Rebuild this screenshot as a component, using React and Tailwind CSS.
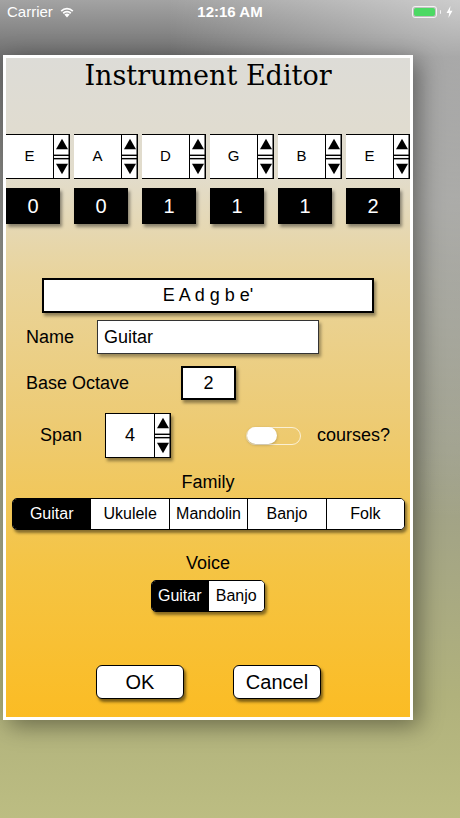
const STRINGS = [
  { note: "E", fret: "0" },
  { note: "A", fret: "0" },
  { note: "D", fret: "1" },
  { note: "G", fret: "1" },
  { note: "B", fret: "1" },
  { note: "E", fret: "2" },
];

const FAMILIES = ["Guitar", "Ukulele", "Mandolin", "Banjo", "Folk"];
const VOICES = ["Guitar", "Banjo"];

function Stepper({ className = "" }) {
  return (
    <svg className={className} viewBox="0 0 16 45" preserveAspectRatio="none" aria-hidden>
      <rect x="0" y="0" width="16" height="45" fill="#fff" />
      <path d="M8 4 L14 15 L2 15 Z" fill="#000" />
      <rect x="0" y="20.5" width="16" height="1.5" fill="#000" />
      <rect x="0" y="24" width="16" height="1.5" fill="#000" />
      <path d="M2 30 L14 30 L8 41 Z" fill="#000" />
      <rect x="14.5" y="0" width="1.5" height="45" fill="#000" />
    </svg>
  );
}

function Wifi() {
  return (
    <svg className="h-[12px] w-[16px]" viewBox="0 0 16 12" aria-hidden>
      <path d="M8 11.5 L5.4 8.6 A3.8 3.8 0 0 1 10.6 8.6 Z" fill="#fff" />
      <path d="M3.6 6.6 A6.4 6.4 0 0 1 12.4 6.6 L11.2 7.9 A4.7 4.7 0 0 0 4.8 7.9 Z" fill="#fff" />
      <path d="M1.6 4.4 A9.2 9.2 0 0 1 14.4 4.4 L13.2 5.7 A7.5 7.5 0 0 0 2.8 5.7 Z" fill="#fff" />
    </svg>
  );
}

function Segmented({ items, selected, className = "", itemClass = "" }) {
  return (
    <div
      className={`flex overflow-hidden rounded-[5px] border border-black bg-white shadow-[2px_3px_3px_rgba(0,0,0,0.45)] ${className}`}
    >
      {items.map((item, i) => (
        <div
          key={item}
          className={[
            "flex flex-1 items-center justify-center text-[16px]",
            i > 0 ? "border-l border-black" : "",
            i === selected ? "bg-black text-white" : "bg-white text-black",
            itemClass,
          ].join(" ")}
        >
          {item}
        </div>
      ))}
    </div>
  );
}

export default function App() {
  return (
    <div
      className="relative flex h-[818px] w-[460px] flex-col overflow-hidden bg-[radial-gradient(ellipse_at_top_right,rgba(255,255,255,0.45)_0%,rgba(255,255,255,0)_45%),linear-gradient(to_bottom,#a3a3a3_0%,#6f6f6f_7%,#8c8c88_25%,#9d9e8a_55%,#b0b17c_85%,#bcbd82_100%)] text-black"
      style={{ fontFamily: '"Liberation Sans", Arial, sans-serif' }}
    >
      {/* status bar */}
      <div className="relative flex h-[24px] items-center px-[7px] text-[15px] text-white">
        <div className="flex items-center gap-[6px]">
          <span>Carrier</span>
          <Wifi />
        </div>
        <span className="absolute left-1/2 -translate-x-1/2 font-semibold">12:16 AM</span>
        <div className="ml-auto flex items-center gap-[3px]">
          <div className="flex h-[12px] w-[25px] items-center rounded-[3px] border border-white/80 p-[1px]">
            <div className="h-full w-full rounded-[2px] bg-[#4cd964]" />
          </div>
          <div className="h-[4px] w-[1.5px] rounded-r bg-white/80" />
          <svg className="ml-[2px] h-[12px] w-[7px]" viewBox="0 0 7 12" aria-hidden>
            <path d="M4.5 0 L0.5 7 L3.2 7 L2.4 12 L6.5 4.8 L3.8 4.8 Z" fill="#fff" />
          </svg>
        </div>
      </div>

      {/* editor panel */}
      <div className="ml-[3px] mt-[31px] h-[665px] w-[410px] border-[3px] border-white shadow-[6px_6px_22px_rgba(0,0,0,0.4)]">
        <div className="flex h-full w-full flex-col overflow-hidden bg-[linear-gradient(to_bottom,#dddcd7_0%,#e2dccb_18%,#e9d49c_33%,#edcb74_55%,#f5c443_78%,#fbbc24_100%)]">
          <h1
            className="flex h-[34px] items-center justify-center text-[27px] leading-none"
            style={{ fontFamily: '"DejaVu Serif", "Liberation Serif", serif' }}
          >
            Instrument Editor
          </h1>

          {/* string notes with steppers */}
          <div className="mt-[42px] flex h-[45px] gap-[4px]">
            {STRINGS.map((s, i) => (
              <div key={i} className="flex h-full w-[64px] shrink-0">
                <div className="flex w-[48px] items-center justify-center border-y border-r-[1.5px] border-black bg-white text-[15px]">
                  {s.note}
                </div>
                <Stepper className="h-full w-[16px] border-y border-black" />
              </div>
            ))}
          </div>

          {/* fret numbers */}
          <div className="mt-[9px] flex h-[36px] gap-[14px]">
            {STRINGS.map((s, i) => (
              <div
                key={i}
                className="flex w-[54px] shrink-0 items-center justify-center bg-black text-[20px] text-white shadow-[2px_3px_3px_rgba(0,0,0,0.4)]"
              >
                {s.fret}
              </div>
            ))}
          </div>

          {/* tuning */}
          <div className="ml-[36px] mt-[54px] flex h-[35px] w-[332px] items-center justify-center border-2 border-black bg-white text-[18px] shadow-[2px_3px_3px_rgba(0,0,0,0.4)]">
            E A d g b e'
          </div>

          {/* name */}
          <div className="mt-[7px] flex h-[34px] items-center">
            <span className="w-[91px] pl-[20px] text-[18px]">Name</span>
            <div className="flex h-full w-[222px] items-center border border-[#333] bg-white pl-[6px] text-[18px] shadow-[2px_3px_3px_rgba(0,0,0,0.35)]">
              Guitar
            </div>
          </div>

          {/* base octave */}
          <div className="mt-[12px] flex h-[34px] items-center">
            <span className="w-[175px] pl-[20px] text-[18px]">Base Octave</span>
            <div className="flex h-full w-[55px] items-center justify-center border-2 border-black bg-white text-[18px] shadow-[2px_3px_3px_rgba(0,0,0,0.4)]">
              2
            </div>
          </div>

          {/* span + courses */}
          <div className="mt-[13px] flex h-[45px] items-center">
            <span className="w-[99px] pl-[34px] text-[18px]">Span</span>
            <div className="flex h-full shadow-[2px_3px_3px_rgba(0,0,0,0.4)]">
              <div className="flex w-[50px] items-center justify-center border-y border-l border-r-[1.5px] border-black bg-white text-[18px]">
                4
              </div>
              <Stepper className="h-full w-[16px] border-y border-black" />
            </div>
            <div className="ml-[75px] flex h-[18px] w-[55px] items-center rounded-full border border-white/70">
              <div className="h-[17px] w-[30px] rounded-full bg-white shadow-[0_1px_3px_rgba(0,0,0,0.25)]" />
            </div>
            <span className="ml-[16px] text-[18px]">courses?</span>
          </div>

          {/* family */}
          <div className="mt-[13px] text-center text-[18px] leading-[22px]">Family</div>
          <Segmented
            items={FAMILIES}
            selected={0}
            className="ml-[6px] mt-[5px] h-[32px] w-[393px]"
          />

          {/* voice */}
          <div className="mt-[22px] text-center text-[18px] leading-[22px]">Voice</div>
          <Segmented
            items={VOICES}
            selected={0}
            className="ml-[145px] mt-[6px] h-[32px] w-[114px]"
          />

          {/* buttons */}
          <div className="mt-[53px] flex h-[34px]">
            <button className="ml-[90px] w-[88px] rounded-[6px] border border-black bg-white text-[20px] shadow-[2px_3px_3px_rgba(0,0,0,0.5)]">
              OK
            </button>
            <button className="ml-[49px] w-[88px] rounded-[6px] border border-black bg-white text-[20px] shadow-[2px_3px_3px_rgba(0,0,0,0.5)]">
              Cancel
            </button>
          </div>
        </div>
      </div>
    </div>
  );
}
